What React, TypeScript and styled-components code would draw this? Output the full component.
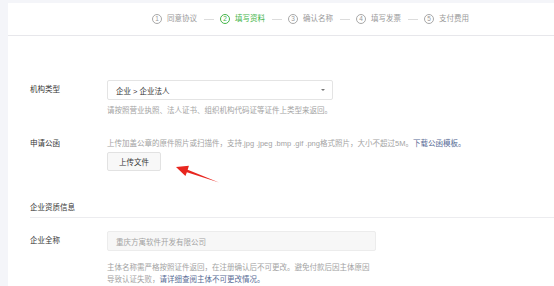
import React from 'react';
import styled, { createGlobalStyle } from 'styled-components';

const GlobalStyle = createGlobalStyle`
  html, body {
    margin: 0;
    padding: 0;
    background: #f4f5f9;
    overflow: hidden;
  }
  body {
    font-family: "Liberation Sans", "Noto Sans CJK SC", sans-serif;
    font-size: 7.5px;
    color: #353535;
  }
`;

const Card = styled.div`
  position: relative;
  margin: 3px 0 0 8px;
  background: #fff;
  min-height: 290px;
`;

const StepsBar = styled.div`
  height: 32px;
  border-bottom: 1px solid #e7e7eb;
  display: flex;
  align-items: center;
  padding-left: 144px;
`;

const Step = styled.div<{ $active?: boolean }>`
  display: flex;
  align-items: center;
  gap: 5px;
  color: ${(p) => (p.$active ? '#44b549' : '#9a9a9a')};
  line-height: 12px;
`;

const StepNum = styled.span<{ $active?: boolean }>`
  width: 8px;
  height: 8px;
  border: 1px solid ${(p) => (p.$active ? '#44b549' : '#a8a8a8')};
  border-radius: 50%;
  display: flex;
  align-items: center;
  justify-content: center;
  font-size: 6.5px;
  line-height: 1;
`;

const StepLine = styled.span`
  width: 10px;
  height: 1px;
  background: #dcdcdc;
  margin: 0 6px 0 7px;
`;

const Content = styled.div`
  padding: 44px 0 0 22px;
`;

const Row = styled.div<{ $top?: number }>`
  display: flex;
  margin-top: ${(p) => p.$top ?? 0}px;
`;

const Label = styled.div<{ $h?: number }>`
  width: 77px;
  flex-shrink: 0;
  height: ${(p) => p.$h ?? 12}px;
  line-height: ${(p) => p.$h ?? 12}px;
  color: #353535;
`;

const Field = styled.div`
  display: flex;
  flex-direction: column;
  align-items: flex-start;
`;

const Select = styled.div`
  box-sizing: border-box;
  width: 226px;
  height: 20px;
  border: 1px solid #e4e4e4;
  border-radius: 2px;
  padding: 0 7px 0 8px;
  display: flex;
  align-items: center;
  justify-content: space-between;
  color: #353535;
`;

const Caret = styled.span`
  width: 0;
  height: 0;
  border-left: 2px solid transparent;
  border-right: 2px solid transparent;
  border-top: 2.5px solid #777;
`;

const Hint = styled.div<{ $top?: number }>`
  margin-top: ${(p) => p.$top ?? 0}px;
  line-height: 12px;
  color: #a3a3a3;
  white-space: nowrap;
`;

const Link = styled.span`
  color: #576b95;
`;

const Button = styled.div`
  box-sizing: border-box;
  margin-top: 2px;
  width: 54px;
  height: 19px;
  border: 1px solid #e2e2e2;
  border-radius: 2px;
  background: #f8f8f8;
  display: flex;
  align-items: center;
  justify-content: center;
  color: #353535;
`;

const SectionTitle = styled.div`
  margin-top: 31px;
  line-height: 12px;
  padding-bottom: 3px;
  border-bottom: 1px solid #ececef;
  color: #353535;
`;

const Input = styled.div`
  box-sizing: border-box;
  width: 269px;
  height: 20px;
  border: 1px solid #ececec;
  border-radius: 2px;
  background: #f7f7f7;
  padding-left: 8px;
  display: flex;
  align-items: center;
  color: #a3a3a3;
`;

const Arrow = styled.svg`
  position: absolute;
  left: 162px;
  top: 156px;
`;

const steps = ['同意协议', '填写资料', '确认名称', '填写发票', '支付费用'];

const App: React.FC = () => (
  <>
    <GlobalStyle />
    <Card>
      <StepsBar>
        {steps.map((s, i) => (
          <React.Fragment key={s}>
            {i > 0 && <StepLine />}
            <Step $active={i === 1}>
              <StepNum $active={i === 1}>{i + 1}</StepNum>
              {s}
            </Step>
          </React.Fragment>
        ))}
      </StepsBar>
      <Content>
        <Row>
          <Label $h={20}>机构类型</Label>
          <Field>
            <Select>
              企业 &gt; 企业法人
              <Caret />
            </Select>
            <Hint $top={5}>请按照营业执照、法人证书、组织机构代码证等证件上类型来返回。</Hint>
          </Field>
        </Row>
        <Row $top={21}>
          <Label>申请公函</Label>
          <Field>
            <Hint>
              上传加盖公章的原件照片或扫描件，支持.jpg .jpeg .bmp .gif .png格式照片，大小不超过5M。
              <Link>下载公函模板。</Link>
            </Hint>
            <Button>上传文件</Button>
          </Field>
        </Row>
        <SectionTitle>企业资质信息</SectionTitle>
        <Row $top={13}>
          <Label $h={20}>企业全称</Label>
          <Field>
            <Input>重庆方寓软件开发有限公司</Input>
            <Hint $top={11}>主体名称需严格按照证件返回，在注册确认后不可更改。避免付款后因主体原因</Hint>
            <Hint>
              导致认证失败，<Link>请详细查阅主体不可更改情况。</Link>
            </Hint>
          </Field>
        </Row>
      </Content>
      <Arrow width="56" height="30" viewBox="0 0 56 30">
        <polygon
          points="6,8 18.9,6.8 17.7,10.8 49,23.5 16.9,13.2 15.4,17"
          fill="#e8261f"
        />
      </Arrow>
    </Card>
  </>
);

export default App;
